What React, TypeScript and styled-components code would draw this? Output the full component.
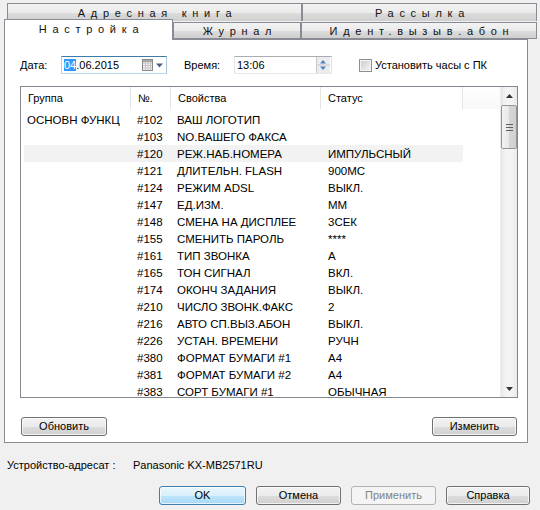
import styled, { createGlobalStyle } from 'styled-components';

const GlobalStyle = createGlobalStyle`
  html, body {
    margin: 0;
    padding: 0;
    background: #f0f0f0;
  }
  body {
    font-family: "Liberation Sans", Arial, sans-serif;
    font-size: 11px;
    color: #000;
  }
  * { box-sizing: border-box; }
`;

const rows = [
  { group: 'ОСНОВН ФУНКЦ', code: '#102', prop: 'ВАШ ЛОГОТИП', status: '' },
  { group: '', code: '#103', prop: 'NO.ВАШЕГО ФАКСА', status: '' },
  { group: '', code: '#120', prop: 'РЕЖ.НАБ.НОМЕРА', status: 'ИМПУЛЬСНЫЙ', hover: true },
  { group: '', code: '#121', prop: 'ДЛИТЕЛЬН. FLASH', status: '900МС' },
  { group: '', code: '#124', prop: 'РЕЖИМ ADSL', status: 'ВЫКЛ.' },
  { group: '', code: '#147', prop: 'ЕД.ИЗМ.', status: 'ММ' },
  { group: '', code: '#148', prop: 'СМЕНА НА ДИСПЛЕЕ', status: '3СЕК' },
  { group: '', code: '#155', prop: 'СМЕНИТЬ ПАРОЛЬ', status: '****' },
  { group: '', code: '#161', prop: 'ТИП ЗВОНКА', status: 'A' },
  { group: '', code: '#165', prop: 'ТОН СИГНАЛ', status: 'ВКЛ.' },
  { group: '', code: '#174', prop: 'ОКОНЧ ЗАДАНИЯ', status: 'ВЫКЛ.' },
  { group: '', code: '#210', prop: 'ЧИСЛО ЗВОНК.ФАКС', status: '2' },
  { group: '', code: '#216', prop: 'АВТО СП.ВЫЗ.АБОН', status: 'ВЫКЛ.' },
  { group: '', code: '#226', prop: 'УСТАН. ВРЕМЕНИ', status: 'РУЧН' },
  { group: '', code: '#380', prop: 'ФОРМАТ БУМАГИ #1', status: 'A4' },
  { group: '', code: '#381', prop: 'ФОРМАТ БУМАГИ #2', status: 'A4' },
  { group: '', code: '#383', prop: 'СОРТ БУМАГИ #1', status: 'ОБЫЧНАЯ' },
];

const Window = styled.div`
  width: 540px;
  height: 510px;
  display: flex;
  flex-direction: column;
  background: #f0f0f0;
  overflow: hidden;
`;

// Tabs
const TabRow = styled.div<{ $back?: boolean }>`
  display: flex;
  align-items: flex-end;
  height: ${({ $back }) => ($back ? '18px' : '20px')};
  margin-top: ${({ $back }) => ($back ? '3px' : '-2px')};
  padding-left: ${({ $back }) => ($back ? '7px' : '4px')};
`;

const Tab = styled.div<{ $width: number; $active?: boolean }>`
  position: relative;
  z-index: ${({ $active }) => ($active ? 2 : 1)};
  width: ${({ $width }) => $width}px;
  height: ${({ $active }) => ($active ? '21px' : '17px')};
  margin-bottom: ${({ $active }) => ($active ? '-1px' : '0')};
  align-self: flex-end;
  display: flex;
  align-items: center;
  justify-content: center;
  padding-left: 6px;
  padding-bottom: ${({ $active }) => ($active ? '3px' : '0')};
  border: 1px solid #898c95;
  border-bottom: ${({ $active }) => ($active ? 'none' : '1px solid #898c95')};
  background: ${({ $active }) =>
    $active ? '#ffffff' : 'linear-gradient(#f3f3f3, #ebebeb 50%, #dddddd 51%, #cfcfcf)'};
  font-size: 11px;
  letter-spacing: 5.7px;
  color: #111;
  white-space: nowrap;
`;

const BackTab = styled(Tab)`
  height: 18px;
  border-bottom: none;
`;

const Panel = styled.div`
  position: relative;
  z-index: 1;
  margin: 0 12px 0 4px;
  height: 404px;
  border: 1px solid #898c95;
  background: #ffffff;
  padding: 16px 9px 0 15px;
  display: flex;
  flex-direction: column;
`;

// Date / time row
const FieldRow = styled.div`
  display: flex;
  align-items: center;
  height: 18px;
`;

const FieldLabel = styled.span<{ $width: number }>`
  width: ${({ $width }) => $width}px;
`;

const InputBox = styled.div<{ $width: number; $focused?: boolean }>`
  width: ${({ $width }) => $width}px;
  height: 18px;
  display: flex;
  align-items: center;
  justify-content: space-between;
  padding: 0 1px 0 2px;
  border: 1px solid;
  border-color: ${({ $focused }) =>
    $focused ? '#3d7bad #a4c9e3 #b7d9ed #b5cfe7' : '#abadb3 #dbdfe6 #e3e9ef #e2e3ea'};
  background: #ffffff;
  font-size: 11px;
  margin-right: ${({ $focused }) => ($focused ? '17px' : '27px')};
`;

const Selected = styled.span`
  background: #3399ff;
  color: #ffffff;
`;

const CheckLabel = styled.label`
  display: flex;
  align-items: center;
  gap: 1px;
`;

const CheckBox = styled.span`
  width: 13px;
  height: 13px;
  border: 1px solid #8e8f8f;
  background: linear-gradient(135deg, #cbcbcb, #f6f6f6);
  box-shadow: inset 0 0 0 1px #f4f4f4;
  margin-right: 2px;
`;

// List view
const ListView = styled.div`
  margin-top: 12px;
  width: 498px;
  height: 312px;
  border: 1px solid #828790;
  display: grid;
  grid-template-columns: 1fr 17px;
  overflow: hidden;
`;

const ListMain = styled.div`
  display: flex;
  flex-direction: column;
  overflow: hidden;
`;

const HeaderRow = styled.div`
  display: grid;
  grid-template-columns: 110px 40px 150px 142px 1fr;
  height: 22px;
  flex-shrink: 0;
  background: #ffffff;
`;

const HeaderCell = styled.div`
  display: flex;
  align-items: center;
  padding-left: 7px;
  border-right: 1px solid #e5e5e5;
  font-size: 11px;
  &:last-child {
    border-right: none;
    background: linear-gradient(#ffffff, #f7f8f9);
  }
`;

const Body = styled.div`
  padding-top: 2px;
`;

const Row = styled.div<{ $hover?: boolean }>`
  display: grid;
  grid-template-columns: 107px 40px 150px 142px;
  width: 439px;
  margin-left: 3px;
  height: 17px;
  align-items: center;
  background: ${({ $hover }) => ($hover ? '#f2f2f2' : 'transparent')};
  font-size: 11.5px;
`;

const Cell = styled.div`
  padding-left: 6px;
  white-space: nowrap;
  &:first-child { padding-left: 3px; }
  &:last-child { padding-left: 7px; }
`;

const ScrollBar = styled.div`
  display: flex;
  flex-direction: column;
  background: linear-gradient(90deg, #e6e6e6, #f4f4f4 30%, #f4f4f4 70%, #e9e9e9);
  border-left: 1px solid #ececec;
`;

const ScrollArrow = styled.div`
  height: 17px;
  display: flex;
  align-items: center;
  justify-content: center;
  flex-shrink: 0;
`;

const Thumb = styled.div`
  height: 44px;
  margin: 1px 0 0 0;
  border: 1px solid #959595;
  border-radius: 2px;
  background: linear-gradient(90deg, #f3f3f3, #e8e8e8 50%, #d6d6d6 51%, #d0d0d0);
  display: flex;
  align-items: center;
  justify-content: center;
`;

const Track = styled.div`
  flex: 1;
`;

// Buttons
const ButtonRow = styled.div<{ $end?: boolean }>`
  display: flex;
  justify-content: ${({ $end }) => ($end ? 'flex-end' : 'space-between')};
  gap: 10px;
`;

const PanelButtons = styled(ButtonRow)`
  margin-top: 19px;
  width: 498px;
  padding: 0 1px;
`;

const Button = styled.button<{ $variant?: 'primary' | 'disabled'; $width?: number }>`
  width: ${({ $width }) => $width ?? 86}px;
  height: 19px;
  padding: 0;
  border-radius: 3px;
  font-family: "Liberation Sans", Arial, sans-serif;
  font-size: 11px;
  line-height: 17px;
  border: 1px solid
    ${({ $variant }) =>
      $variant === 'primary' ? '#3c7fb1' : $variant === 'disabled' ? '#adb2b5' : '#707070'};
  color: ${({ $variant }) => ($variant === 'disabled' ? '#838383' : '#000')};
  background: ${({ $variant }) =>
    $variant === 'primary'
      ? 'linear-gradient(#eaf6fd, #d9f0fc 50%, #bee6fd 51%, #a7d9f5)'
      : $variant === 'disabled'
      ? '#f4f4f4'
      : 'linear-gradient(#f2f2f2, #ebebeb 50%, #dddddd 51%, #cfcfcf)'};
  box-shadow: inset 0 0 0 1px
    ${({ $variant }) => ($variant === 'disabled' ? 'transparent' : 'rgba(255,255,255,0.7)')};
`;

const DeviceRow = styled.div`
  display: flex;
  margin-top: 15px;
  padding-left: 7px;
  height: 14px;
  align-items: center;
`;

const DeviceLabel = styled.span`
  width: 126px;
`;

const BottomButtons = styled(ButtonRow)`
  margin-top: 14px;
  padding-right: 10px;
  gap: 10px;
`;

const CalendarIcon = () => (
  <svg width="24" height="14" viewBox="0 0 24 14">
    <rect x="1.5" y="1.5" width="10" height="11" fill="#f4f4f4" stroke="#8a8a8a" />
    <rect x="2" y="2" width="9" height="2" fill="#a9a9a9" />
    {[4.5, 7, 9.5].map(y => (
      <line key={y} x1="2" y1={y + 0.5} x2="11" y2={y + 0.5} stroke="#c4c4c4" />
    ))}
    {[4, 6.5, 9].map(x => (
      <line key={x} x1={x + 0.5} y1="4" x2={x + 0.5} y2="12" stroke="#c4c4c4" />
    ))}
    <path d="M15 5.5h7l-3.5 4z" fill="#4d6185" />
  </svg>
);

const SpinIcon = () => (
  <svg width="14" height="16" viewBox="0 0 14 16">
    <rect x="0" y="0" width="14" height="16" fill="#ececec" />
    <line x1="0.5" y1="0" x2="0.5" y2="16" stroke="#c9c9c9" />
    <line x1="0" y1="8" x2="14" y2="8" stroke="#c9c9c9" />
    <path d="M4 6.5h6l-3-3.5z" fill="#4a83c7" />
    <path d="M4 9.5h6l-3 3.5z" fill="#4a83c7" />
  </svg>
);

const ArrowUp = () => (
  <svg width="7" height="4" viewBox="0 0 7 4">
    <path d="M0 4h7L3.5 0z" fill="#333" />
  </svg>
);

const ArrowDown = () => (
  <svg width="7" height="4" viewBox="0 0 7 4">
    <path d="M0 0h7L3.5 4z" fill="#333" />
  </svg>
);

const Grip = () => (
  <svg width="7" height="7" viewBox="0 0 7 7">
    {[0.5, 3.5, 6.5].map(y => (
      <line key={y} x1="0" y1={y} x2="7" y2={y} stroke="#5f5f5f" />
    ))}
  </svg>
);

export default function App() {
  return (
    <Window>
      <GlobalStyle />
      <TabRow $back>
        <BackTab $width={295}>Адресная книга</BackTab>
        <BackTab $width={235}>Рассылка</BackTab>
      </TabRow>
      <TabRow>
        <Tab $width={169} $active>Настройка</Tab>
        <Tab $width={128}>Журнал</Tab>
        <Tab $width={236}>Идент.вызыв.абон</Tab>
      </TabRow>

      <Panel>
        <FieldRow>
          <FieldLabel $width={41}>Дата:</FieldLabel>
          <InputBox $width={106} $focused>
            <span>
              <Selected>04</Selected>.06.2015
            </span>
            <CalendarIcon />
          </InputBox>
          <FieldLabel $width={50}>Время:</FieldLabel>
          <InputBox $width={98}>
            <span>13:06</span>
            <SpinIcon />
          </InputBox>
          <CheckLabel>
            <CheckBox />
            Установить часы с ПК
          </CheckLabel>
        </FieldRow>

        <ListView>
          <ListMain>
            <HeaderRow>
              <HeaderCell>Группа</HeaderCell>
              <HeaderCell>№.</HeaderCell>
              <HeaderCell>Свойства</HeaderCell>
              <HeaderCell>Статус</HeaderCell>
              <HeaderCell />
            </HeaderRow>
            <Body>
              {rows.map(r => (
                <Row key={r.code} $hover={r.hover}>
                  <Cell>{r.group}</Cell>
                  <Cell>{r.code}</Cell>
                  <Cell>{r.prop}</Cell>
                  <Cell>{r.status}</Cell>
                </Row>
              ))}
            </Body>
          </ListMain>
          <ScrollBar>
            <ScrollArrow><ArrowUp /></ScrollArrow>
            <Thumb><Grip /></Thumb>
            <Track />
            <ScrollArrow><ArrowDown /></ScrollArrow>
          </ScrollBar>
        </ListView>

        <PanelButtons>
          <Button>Обновить</Button>
          <Button $width={85}>Изменить</Button>
        </PanelButtons>
      </Panel>

      <DeviceRow>
        <DeviceLabel>Устройство-адресат :</DeviceLabel>
        <span>Panasonic KX-MB2571RU</span>
      </DeviceRow>

      <BottomButtons $end>
        <Button $variant="primary" $width={87}>OK</Button>
        <Button $width={85}>Отмена</Button>
        <Button $variant="disabled" $width={85}>Применить</Button>
        <Button $width={84}>Справка</Button>
      </BottomButtons>
    </Window>
  );
}
